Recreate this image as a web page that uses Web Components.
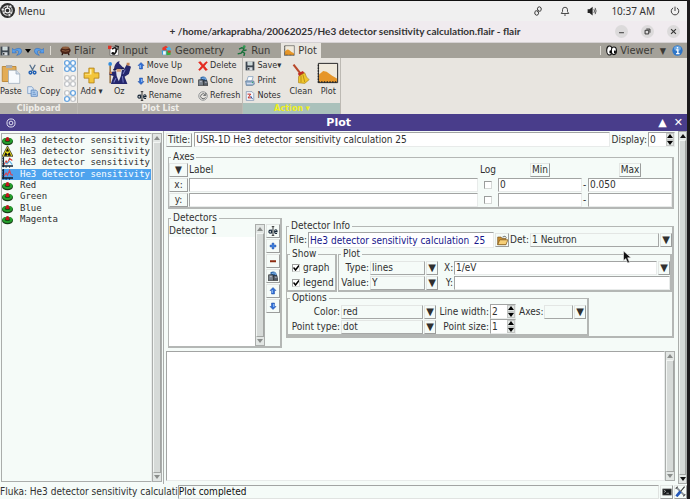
<!DOCTYPE html>
<html lang="en">
<head>
<meta charset="utf-8">
<title>flair</title>
<style>
  :root {
    --mint: #f5fbf8;
    --ink: #303030;
    --tk: "DejaVu Sans Condensed", "DejaVu Sans", sans-serif;
  }
  html, body { margin: 0; height: 100%; }
  body { color: var(--ink); font: 10px/12px var(--tk); }
</style>
</head>
<body>
<flair-app></flair-app>

<script>
// Shared by every form control
const controlStyle = `
  * { box-sizing: border-box; }
  input, select, button, textarea { font: inherit; color: inherit; margin: 0; padding: 0; border-radius: 0; outline: 0; min-width: 0; }
  .raised { background: var(--mint); border: 1px solid; border-color: #e3e6e4 #9b9d9c #9b9d9c #e3e6e4; display: flex; align-items: center; justify-content: center; }
  .sunken { background: #fff; border: 1px solid; border-color: #a2a4a3 #e8ebea #e8ebea #a2a4a3; }
`;

const arrowUp = '<path d="M8 1l6 6h-3v7H5V7H2z" fill="#2f6fd6" stroke="#1c4aa0"/><path d="M6.500 6v6" stroke="#9cc6fa" stroke-width="2"/>';
const ufo = '<ellipse cx="8" cy="9.500" rx="8" ry="5.500" fill="#173d17"/><ellipse cx="8" cy="8.500" rx="7.500" ry="4.600" fill="#25a02e"/><ellipse cx="8" cy="8" rx="4" ry="2.300" fill="#0d4b12"/><path d="M5 8l1-4 2-1 2 1 1 4-3 1z" fill="#c3161c"/>';
const axes = '<path d="M2 0v15M0 13h16" stroke="#123" stroke-width="2" fill="none"/><path d="M0 2h2M0 6h2M0 10h2M6 13v3M11 13v3" stroke="#123"/>';
const squares = (a, b, c, d) => [[1, 1, a], [9, 1, b], [1, 9, c], [9, 9, d]]
  .map(([x, y, on]) => `<rect x="${x}" y="${y}" width="6" height="6" rx="2" fill="#fff" stroke="${on ? '#4a94dc' : '#b9bcc0'}" stroke-width="1.600"/>`).join('');

const icons = {
  ubuntu: '<circle cx="8" cy="8" r="8" fill="#2c2c2c"/><circle cx="8" cy="8" r="5" fill="none" stroke="#ddd" stroke-width="1.200"/><circle cx="8" cy="8" r="2.600" fill="none" stroke="#eee" stroke-width="1.300"/><path d="M8 5.500V3M5.800 9.300L3.500 10.700M10.200 9.300l2.300 1.400" stroke="#eee"/><g fill="#eee" stroke="#2c2c2c" stroke-width=".6"><circle cx="3" cy="7" r="1.600"/><circle cx="11" cy="3.700" r="1.600"/><circle cx="10" cy="12.800" r="1.600"/></g>',
  link: '<g fill="none" stroke="#333" stroke-width="1.500"><path d="M8 10L5 7Q2 9 3 13q2 3 5 1 2-2 0-6"/><path d="M8 6l3 3q3-2 2-6-2-3-5-1-2 2 0 6"/></g>',
  bell: '<path d="M2 12h12l-2-3V6q0-4-4-4T4 6v3zM6.500 14.500h3" fill="none" stroke="#333" stroke-width="1.400"/>',
  sound: '<path d="M1 5h3l5-4v14l-5-4H1z" fill="#222"/><path d="M11 5q2 3 0 6M13 3q3 5 0 10" fill="none" stroke="#444" stroke-width="1.400"/>',
  power: '<path d="M5 3a6 6 0 1 0 6 0M8 1v7" fill="none" stroke="#333" stroke-width="1.500"/>',
  min: '<circle cx="8" cy="8" r="8" fill="#dcdadb"/><path d="M5 9.500h6" stroke="#333" stroke-width="1.200"/>',
  max: '<circle cx="8" cy="8" r="8" fill="#dcdadb"/><path d="M5 6.500h4.500V11H5zM6.500 5H11v4.500" fill="none" stroke="#333" stroke-width="1.200"/>',
  close: '<circle cx="8" cy="8" r="8" fill="#dcdadb"/><path d="M5 5l6 6M11 5l-6 6" stroke="#333" stroke-width="1.300"/>',
  floppy: '<path d="M1 1h14v14H1z" fill="#3c4650"/><path d="M4 1h8v6H4z" fill="#f5f5f5"/><path d="M4 10h8v5H4z" fill="#d6dbe0"/><path d="M5 11h2v3H5z" fill="#222"/><path d="M5 3h6M5 5h6" stroke="#8aa"/>',
  undo: '<path d="M0 4v7h7L5 8.500q4-2.500 5.500 0 1 3-3 6.500 8-2 8-8-2-6-12-1z" fill="#5b9fe8" stroke="#2a64b4" stroke-width=".8"/>',
  redo: '<path d="M16 4v7H9l2-2.500Q7 6 5.500 8.500q-1 3 3 6.500-8-2-8-8 2-6 12-1z" fill="#5b9fe8" stroke="#2a64b4" stroke-width=".8"/>',
  flair: '<path d="M3 11l-1 4h2l1-3M13 11l1 4h-2l-1-3" fill="#2a1710"/><ellipse cx="8" cy="8" rx="7.500" ry="5" fill="#4a2417"/><ellipse cx="8" cy="4" rx="5.500" ry="2" fill="#8d5b3c"/><path d="M3 8q5 2 10 0" stroke="#b27b54" fill="none"/>',
  input: '<path d="M3 3h12v12H3z" fill="#fff" stroke="#333" stroke-width=".7"/><path d="M0 1h5v5H0z" fill="#dc3428"/><path d="M6 6q5-4 6 0t-4 8" fill="none" stroke="#111" stroke-width="2.400"/><circle cx="7" cy="12" r="2" fill="#111"/><path d="M10 1l5 1-1 5" fill="none" stroke="#111" stroke-width="1.500"/>',
  geometry: '<path d="M2 4l5-3 4 3v4H2z" fill="#e8382b"/><path d="M7 5l5-3 3 4-4 4z" fill="#46b6e8"/><path d="M1 8h7v6H2z" fill="#2e9fe3"/><path d="M3 9h4v5H3z" fill="#f3f8fb"/><path d="M8 8l6 1v5l-6 1z" fill="#36ad3e"/><path d="M10 8h4v3h-4z" fill="#d93a2c"/>',
  run: '<circle cx="10.500" cy="2.500" r="2" fill="#2e9a50"/><path d="M3 6l4-2 3 1-2 5 3 2-1 4M8 9l-2 3-5 1M9 6l2 2 3-1" fill="none" stroke="#18703a" stroke-width="2"/>',
  plot: '<path d="M1 1h14v14H1z" fill="#efe9dc" stroke="#222" stroke-width=".7"/><path d="M1.500 14.500V9l3-2.500 2.500.5 4 3 3.500 2v2.500z" fill="#e69629"/><path d="M1 15V1M1 14.500h14" stroke="#222" stroke-width="1" stroke-dasharray="1 1"/>',
  viewer: '<g fill="#fff" stroke="#111" stroke-width="1.600"><ellipse cx="5" cy="8" rx="4" ry="6.500"/><ellipse cx="11.500" cy="8.500" rx="3.700" ry="5.500"/></g><ellipse cx="6.500" cy="10" rx="1.600" ry="2.500"/><ellipse cx="13" cy="10" rx="1.500" ry="2.300"/>',
  info: '<circle cx="8" cy="8" r="7.500" fill="#2f76c8"/><ellipse cx="8" cy="5" rx="5" ry="3.500" fill="#6ba6e3"/><path d="M8 3v2M6 7h2.500v5M6 12.500h5" stroke="#fff" stroke-width="2" fill="none"/>',
  paste: '<path d="M1 2h11v12H1z" fill="#e3ac55" stroke="#b98331" stroke-width=".7"/><path d="M4 .8h5v2.500H4z" fill="#a9adb3"/><path d="M6 5h6l3 3v7.500H6z" fill="#f7fafd" stroke="#9aa9ba" stroke-width=".6"/><path d="M12 5v3h3" fill="#cfdbe8" stroke="#9aa9ba" stroke-width=".6"/>',
  cut: '<path d="M4 1l5 9M12 1L7 10" stroke="#57718c" stroke-width="1.800"/><g fill="none" stroke="#1f5fb4" stroke-width="2"><circle cx="5" cy="12.500" r="2"/><circle cx="11" cy="12.500" r="2"/></g>',
  copy: '<path d="M1 1h6l2 2v8H1z" fill="#dce9f8" stroke="#6d92c0"/><path d="M6 6h7l2 2v7H6z" fill="#b7d2f0" stroke="#3f73b4"/><path d="M8 9h4M8 12h5" stroke="#3f73b4"/>',
  sqAll: squares(1, 1, 1, 1), sqNone: squares(0, 0, 0, 0), sqMix: squares(0, 1, 1, 0),
  add: '<path d="M5.500 1h5v4.500H15v5h-4.500V15h-5v-4.500H1v-5h4.500z" fill="#f3c53b" stroke="#aa7a12" stroke-width=".7"/><path d="M6.500 2h1.500v5H2V6.500h4.500z" fill="#fdf0b0"/>',
  wizard: '<path d="M1.500 3v12.500" stroke="#8f6530"/><circle cx="1.500" cy="2" r="1.300" fill="#2f8de0"/><path d="M4 6Q4.500 1 8 0l-.3 1.600L11 5z" fill="#2a2a72"/><path d="M3.500 5.500l7.500-1 .5 1-7.500 1.200z" fill="#191b50"/><path d="M3 7.500l8-1.500 2-3.500 3 1.500-1.500 5-3 2 2 5H2L3.800 10.500 1 9.500V8z" fill="#25276c"/><path d="M5.500 6h4.200L9 10.500 7.500 14 6 10.500z" fill="#e4e4e8"/><path d="M6 5.500h3v2H6z" fill="#d9a47e"/><path d="M13 1.200h2v2h-2zM1 7.500h1.800v1.600H1z" fill="#c58353"/><path d="M5.500 12l-1.500 3M10 10.500l.6 4.500M12 6l-1.500 3" stroke="#7479c5" stroke-width=".7"/>',
  up: arrowUp,
  down: `<g transform="rotate(180 8 8)">${arrowUp}</g>`,
  rename: '<path d="M8 1v14M6 1h4M6 15h4" stroke="#111" stroke-width="1.300"/><ellipse cx="3.500" cy="9" rx="2" ry="2.500" fill="none" stroke="#123" stroke-width="1.800"/><path d="M6 5.500V12M10.500 9h4q0-3-2-3t-2 3 2 3h2" stroke="#123" stroke-width="1.700" fill="none"/>',
  del: '<path d="M1 2l3-1 4 5 5-5 2 1-5 6 5 6-3 1-4-5-5 5-2-1 5-6z" fill="#e4281d" stroke="#e4281d"/>',
  clone: '<path d="M4 2q5-3 9 1l2 6-6 1-5-3z" fill="#2e68a8"/><path d="M1 6h7l1 9H0z" fill="#7c858f" stroke="#222"/><path d="M9 7h5l2 8H9z" fill="#59636e" stroke="#222"/><path d="M3 9h3M11 10h3" stroke="#dde"/><path d="M6 4l5-1 1 3" fill="none" stroke="#8abcf0" stroke-width="1.500"/>',
  refresh: '<circle cx="8" cy="8" r="6.800" fill="none" stroke="#8d9092" stroke-width="1.500"/><path d="M11.500 6A4 4 0 1 0 12 10M12.500 3v4h-4" fill="none" stroke="#66696b" stroke-width="1.600"/>',
  print: '<path d="M5 1h8l-2 7H3z" fill="#fff" stroke="#688bb4"/><path d="M1 8h13l1 5-3 2H2z" fill="#9fb7d0" stroke="#4b6a8d"/><path d="M3 12h9" stroke="#eef"/><circle cx="12" cy="10" r="1" fill="#2a5"/>',
  notes: '<path d="M2 1h9l3 3v11H2z" fill="#f3f6fb" stroke="#6680a5"/><path d="M4 5h5L5 11h5" stroke="#c22a22" stroke-width="1.600" fill="none"/><path d="M9 8l3 5" stroke="#2c5ba9" stroke-width="1.600"/>',
  broom: '<path d="M2 .5l5.500 7" stroke="#b8482a" stroke-width="1.700"/><path d="M5.500 7.500l4-2 1.500 2-4.500 2.500z" fill="#bf2d24"/><path d="M6 10l5-3q1 4 3.500 5.500L11 15.500l-5-.5z" fill="#f0c62c" stroke="#a87e13" stroke-width=".5"/><path d="M8 9.500v5M9.500 8.500l1.500 6" stroke="#a87e13" stroke-width=".6"/>',
  ufo,
  rad: '<path d="M8 0l8 15H0z" fill="#e9dd1c" stroke="#222"/><path d="M8 3l2.500 5h-5zM3 14l2-5 3 3-1 2zM13 14l-2-5-3 3 1 2z" fill="#111"/>',
  lines: axes + '<path d="M3 11l3-5 2 3 3-7 4 3" fill="none" stroke="#d83a30" stroke-width="1.700"/><path d="M4 8l3 2 4-4 4 5" fill="none" stroke="#62b4e8" stroke-width="1.600"/>',
  line1: axes + '<path d="M3 10l3-4 2 3 3-7 2 6 3 1" fill="none" stroke="#d3485a" stroke-width="1.800"/>',
  plus: '<path d="M6 2h4v4h4v4h-4v4H6v-4H2V6h4z" fill="#3d7fdc" stroke="#254f9e" stroke-width=".8"/>',
  minus: '<path d="M2 6.500h12v4H2z" fill="#8c2d12"/>',
  folder: '<path d="M1 3h5l1 2h6v9H1z" fill="#c98f31" stroke="#7a551b"/><path d="M4 7h12l-3 7H1z" fill="#f6cf77" stroke="#7a551b"/><path d="M8 3q4-3 6 1" fill="none" stroke="#333"/>',
  term: '<path d="M1 3h14v10H1z" fill="#15181a" stroke="#777"/><path d="M3 5l3 2-3 2M7 10h4" stroke="#ddd" fill="none"/>',
  tools: '<path d="M2 2l12 12" stroke="#8a9097" stroke-width="2.500"/><path d="M14 1L8 8" stroke="#333" stroke-width="1.600"/><path d="M8 8l-6 7" stroke="#2457b8" stroke-width="4"/><path d="M1 4l3-3M12 15l3-3" stroke="#555" stroke-width="1.600"/>',
  target: '<g fill="none" stroke="#e8e6f5" stroke-width="1.500"><circle cx="8" cy="8" r="6.500"/><circle cx="8" cy="8" r="3"/></g>',
  cursor: '<path d="M2 0v13l3-3 2.500 6 2.500-1-2.500-6H12z" fill="#111" stroke="#eee" stroke-width=".8"/>'
};

class UiIcon extends HTMLElement {
  constructor() {
    super();
    this.attachShadow({ mode: 'open' });
  }
  connectedCallback() {
    const size = this.getAttribute('size') || 12;
    this.shadowRoot.innerHTML = `
      <style>
        :host { display: inline-flex; flex: none; }
        svg { display: block; width: ${size}px; height: ${size}px; }
      </style>
      <svg viewBox="0 0 16 16" aria-hidden="true">${icons[this.getAttribute('name')]}</svg>`;
  }
}
customElements.define('ui-icon', UiIcon);

class TkButton extends HTMLElement {
  constructor() {
    super();
    this.attachShadow({ mode: 'open' });
  }
  connectedCallback() {
    this.shadowRoot.innerHTML = `
      <style>${controlStyle}
        :host { display: flex; flex: none; }
        button { flex: 1; }
        .raised { padding: 0 1px; }
      </style>
      <button class="raised" aria-label="${this.getAttribute('name') || this.textContent}"><slot></slot></button>`;
  }
}
customElements.define('tk-button', TkButton);

class TkEntry extends HTMLElement {
  constructor() {
    super();
    this.attachShadow({ mode: 'open' });
  }
  connectedCallback() {
    this.shadowRoot.innerHTML = `
      <style>${controlStyle}
        :host { display: flex; min-width: 0; }
        input { flex: 1; width: 0; height: var(--entry, 15px); padding: 0 1px; line-height: 14px; }
      </style>
      <input class="sunken" aria-label="${this.getAttribute('name')}" value="${this.getAttribute('value') || ''}">`;
  }
}
customElements.define('tk-entry', TkEntry);

// Label, read-only field and a separate drop-down arrow
class TkSelect extends HTMLElement {
  constructor() {
    super();
    this.attachShadow({ mode: 'open' });
  }
  connectedCallback() {
    const editable = this.hasAttribute('editable');
    const value = this.getAttribute('value') || '';
    this.shadowRoot.innerHTML = `
      <style>${controlStyle}
        :host { display: flex; align-items: center; gap: 1px; min-width: 0; }
        label { width: var(--label, auto); text-align: right; white-space: nowrap; }
        select, input { flex: 1; width: 0; height: 14px; padding: 0 1px; appearance: none; }
        select { background: var(--mint); border: 1px solid; border-color: #e3e6e4 #a5a7a6 #a5a7a6 #e3e6e4; }
        .raised { width: 12px; height: 14px; font: 10px/12px "DejaVu Sans"; }
      </style>
      <label for="f">${this.getAttribute('label')}</label>
      ${editable ? `<input id="f" class="sunken" value="${value}">` : `<select id="f"><option>${value}</option></select>`}
      <button class="raised" aria-label="Open list">▼</button>`;
  }
}
customElements.define('tk-select', TkSelect);

class TkSpin extends HTMLElement {
  constructor() {
    super();
    this.attachShadow({ mode: 'open' });
  }
  connectedCallback() {
    this.shadowRoot.innerHTML = `
      <style>${controlStyle}
        :host { display: flex; align-items: center; gap: 1px; }
        label { width: var(--label, auto); text-align: right; white-space: nowrap; }
        .box { display: flex; width: 27px; height: 15px; }
        input { flex: 1; width: 0; border: 0; background: none; padding-left: 1px; }
        .steps { display: flex; flex-direction: column; width: 8px; }
        button { flex: 1; border: 1px solid #c3c6c4; background: #e2e6e4; display: flex; align-items: center; justify-content: center; }
        svg { width: 6px; height: 4px; flex: none; }
      </style>
      <label for="f">${this.getAttribute('label')}</label>
      <span class="box sunken">
        <input id="f" value="${this.getAttribute('value')}">
        <span class="steps">
          <button aria-label="Increase"><svg viewBox="0 0 6 4"><path d="M0 4l3-4 3 4z"/></svg></button>
          <button aria-label="Decrease"><svg viewBox="0 0 6 4"><path d="M0 0l3 4 3-4z"/></svg></button>
        </span>
      </span>`;
  }
}
customElements.define('tk-spin', TkSpin);

class TkCheck extends HTMLElement {
  constructor() {
    super();
    this.attachShadow({ mode: 'open' });
  }
  connectedCallback() {
    this.shadowRoot.innerHTML = `
      <style>${controlStyle}
        :host, label { display: flex; align-items: center; gap: 3px; }
        input { appearance: none; width: 8px; height: 8px; background: #fff; border: 1px solid; border-color: #9b9d9c #d5d8d6 #d5d8d6 #9b9d9c; }
        input:checked { background: #fff url('data:image/svg+xml,<svg xmlns="http://www.w3.org/2000/svg" viewBox="0 0 6 6"><path d="M.5 2.500l2 2.500L6 .5" fill="none" stroke="black" stroke-width="1.500"/></svg>'); }
      </style>
      <label><input type="checkbox" aria-label="${this.getAttribute('name') || this.textContent}" ${this.hasAttribute('checked') ? 'checked' : ''}><slot></slot></label>`;
  }
}
customElements.define('tk-check', TkCheck);

class TkFrame extends HTMLElement {
  constructor() {
    super();
    this.attachShadow({ mode: 'open' });
  }
  connectedCallback() {
    this.shadowRoot.innerHTML = `
      <style>
        :host { display: flex; min-width: 0; }
        fieldset { flex: 1; min-width: 0; margin: 0; padding: 0; border: solid #b4b7b5; border-width: 1px 2px 2px 1px; }
        legend { margin-left: 2px; padding: 0 2px; line-height: 12px; }
      </style>
      <fieldset><legend>${this.getAttribute('label')}</legend><slot></slot></fieldset>`;
  }
}
customElements.define('tk-frame', TkFrame);

class TkScroll extends HTMLElement {
  constructor() {
    super();
    this.attachShadow({ mode: 'open' });
    this.shadowRoot.innerHTML = `
      <style>${controlStyle}
        :host { display: flex; flex-direction: column; flex: none; width: 10px; background: #c3c6c4; box-sizing: border-box; border: 1px solid #aaadab; color: #8a8d8b; }
        :host([dark]) { color: #111; }
        button { height: 8px; border: 0; background: #e2e6e4; display: flex; align-items: center; justify-content: center; }
        div { flex: 1; background: #d6dad8; border: 1px solid; border-color: #f2f5f3 #a2a5a3 #a2a5a3 #f2f5f3; }
        svg { width: 6px; height: 4px; fill: currentColor; }
      </style>
      <button aria-label="Scroll up"><svg viewBox="0 0 6 4"><path d="M0 4l3-4 3 4z"/></svg></button>
      <div></div>
      <button aria-label="Scroll down"><svg viewBox="0 0 6 4"><path d="M0 0l3 4 3-4z"/></svg></button>`;
  }
}
customElements.define('tk-scroll', TkScroll);

class DesktopBar extends HTMLElement {
  constructor() {
    super();
    this.attachShadow({ mode: 'open' });
    this.shadowRoot.innerHTML = `
      <style>
        :host { display: flex; align-items: center; height: 21px; box-sizing: border-box; border-top: 1px solid #111; background: #f0f0f0; font: 10px/14px "Noto Sans", sans-serif; color: #333; }
        button { display: flex; align-items: center; gap: 3px; border: 0; padding: 0 0 1px; background: none; font: inherit; color: inherit; }
        .tray { margin-left: auto; display: flex; align-items: center; gap: 17px; padding: 0 7px 1px 0; }
        time { margin: 0 -2px 0 -3px; }
      </style>
      <button><ui-icon name="ubuntu" size="15"></ui-icon>Menu</button>
      <div class="tray">
        <ui-icon name="link" size="10"></ui-icon>
        <ui-icon name="bell" size="10"></ui-icon>
        <ui-icon name="sound" size="10"></ui-icon>
        <time>10:37 AM</time>
        <ui-icon name="power" size="10"></ui-icon>
      </div>`;
  }
}
customElements.define('desktop-bar', DesktopBar);

class WindowTitle extends HTMLElement {
  constructor() {
    super();
    this.attachShadow({ mode: 'open' });
    this.shadowRoot.innerHTML = `
      <style>
        :host { display: flex; align-items: center; height: 22px; box-sizing: border-box; background: #f0ebef; border-bottom: 1px solid #d5d1d3; font: bold 10px/14px Lato, sans-serif; color: #333; }
        h1 { flex: 1; margin: 0; padding: 0 0 1px 75px; font: inherit; text-align: center; white-space: nowrap; }
        nav { display: flex; gap: 13px; padding-right: 7px; }
        button { display: flex; border: 0; padding: 0; background: none; }
      </style>
      <h1><slot></slot></h1>
      <nav>
        <button aria-label="Minimize"><ui-icon name="min" size="13"></ui-icon></button>
        <button aria-label="Maximize"><ui-icon name="max" size="13"></ui-icon></button>
        <button aria-label="Close"><ui-icon name="close" size="13"></ui-icon></button>
      </nav>`;
  }
}
customElements.define('window-title', WindowTitle);

class RibbonTabs extends HTMLElement {
  constructor() {
    super();
    this.attachShadow({ mode: 'open' });
    this.shadowRoot.innerHTML = `
      <style>
        :host { display: flex; height: 15px; background: #a4a199; font-size: 11px; line-height: 14px; color: #3b3935; }
        button { display: flex; align-items: center; gap: 3px; border: 0; padding: 0 7px 0 6px; background: none; font: inherit; color: inherit; }
        .quick { display: flex; align-items: center; }
        .quick button { padding: 0 2px 0 0; }
        .quick svg { width: 6px; height: 4px; margin: 0 1px; }
        i { width: 1px; height: 9px; margin: 0 3px 0 4px; background: #dedbd4; }
        .on { background: #e8e5e0; padding: 0 4px 0 3px; margin-left: 4px; }
        .right { margin-left: auto; display: flex; align-items: center; }
        .right button { padding: 0 4px 0 2px; }
        .right .drop { font-size: 9px; }
      </style>
      <div class="quick">
        <button aria-label="Save"><ui-icon name="floppy" size="10"></ui-icon></button>
        <button aria-label="Undo"><ui-icon name="undo" size="10"></ui-icon></button>
        <button aria-label="Undo list"><svg viewBox="0 0 6 4"><path d="M0 0h6L3 4z"/></svg></button>
        <button aria-label="Redo"><ui-icon name="redo" size="10"></ui-icon></button>
        <i></i>
      </div>
      <button><ui-icon name="flair" size="11"></ui-icon>Flair</button>
      <button><ui-icon name="input" size="11"></ui-icon>Input</button>
      <button><ui-icon name="geometry" size="11"></ui-icon>Geometry</button>
      <button><ui-icon name="run" size="11"></ui-icon>Run</button>
      <button class="on"><ui-icon name="plot" size="11"></ui-icon>Plot</button>
      <div class="right">
        <i></i>
        <button><ui-icon name="viewer" size="11"></ui-icon>Viewer</button>
        <button class="drop">▼</button>
        <button aria-label="Information"><ui-icon name="info" size="11"></ui-icon></button>
      </div>`;
  }
}
customElements.define('ribbon-tabs', RibbonTabs);

class RibbonButton extends HTMLElement {
  constructor() {
    super();
    this.attachShadow({ mode: 'open' });
  }
  connectedCallback() {
    const big = this.hasAttribute('big');
    this.shadowRoot.innerHTML = `
      <style>
        :host { display: flex; }
        button { display: flex; align-items: center; gap: 2px; padding: 0; border: 0; background: none; font: inherit; color: inherit; white-space: nowrap; }
        .big { flex-direction: column; justify-content: flex-end; gap: 2px; padding-bottom: 6px; }
      </style>
      <button class="${big ? 'big' : ''}" aria-label="${this.getAttribute('name') || this.textContent}"><ui-icon name="${this.getAttribute('icon')}" size="${this.getAttribute('size') || 11}"></ui-icon><slot></slot></button>`;
  }
}
customElements.define('ribbon-button', RibbonButton);

class RibbonGroup extends HTMLElement {
  constructor() {
    super();
    this.attachShadow({ mode: 'open' });
  }
  connectedCallback() {
    this.shadowRoot.innerHTML = `
      <style>
        :host { display: flex; flex-direction: column; border-right: 1px solid #bcb9b3; }
        div { flex: 1; display: flex; }
        footer { height: 11px; line-height: 11px; text-align: center; font-weight: bold; background: var(--foot, #b3b0aa); color: var(--foot-ink, #f0eee9); }
      </style>
      <div><slot></slot></div>
      <footer>${this.getAttribute('label')}</footer>`;
  }
}
customElements.define('ribbon-group', RibbonGroup);

class RibbonBar extends HTMLElement {
  constructor() {
    super();
    this.attachShadow({ mode: 'open' });
    this.shadowRoot.innerHTML = `
      <style>
        :host { display: flex; height: 56px; background: #e8e5e0; font-size: 9px; line-height: 11px; }
        .col { display: flex; flex-direction: column; justify-content: space-around; }
        .cut { margin: 0 3px 0 5px; }
        .squares { padding: 0 1px; background: #f1efeb; }
        .big { margin-left: 5px; }
        .add { margin-left: 2px; }
        .moves { margin: 0 4px 0 6px; }
        .edit { margin-right: 2px; }
        .action { --foot: #aac1bb; --foot-ink: #eef01e; }
        .save { margin: 0 3px 0 2px; }
        .last { margin-right: 1px; }
      </style>
      <ribbon-group label="Clipboard">
        <ribbon-button big icon="paste" size="20">Paste</ribbon-button>
        <div class="col cut">
          <ribbon-button icon="cut">Cut</ribbon-button>
          <ribbon-button icon="copy">Copy</ribbon-button>
        </div>
        <div class="col squares">
          <ribbon-button icon="sqAll" name="Select all" size="12"></ribbon-button>
          <ribbon-button icon="sqNone" name="Select none" size="12"></ribbon-button>
          <ribbon-button icon="sqMix" name="Invert selection" size="12"></ribbon-button>
        </div>
      </ribbon-group>
      <ribbon-group label="Plot List">
        <ribbon-button class="add" big icon="add" size="17">Add ▾</ribbon-button>
        <ribbon-button class="big" big icon="wizard" size="23">Oz</ribbon-button>
        <div class="col moves">
          <ribbon-button icon="up" size="8">Move Up</ribbon-button>
          <ribbon-button icon="down" size="8">Move Down</ribbon-button>
          <ribbon-button icon="rename" size="10">Rename</ribbon-button>
        </div>
        <div class="col edit">
          <ribbon-button icon="del" size="10">Delete</ribbon-button>
          <ribbon-button icon="clone" size="10">Clone</ribbon-button>
          <ribbon-button icon="refresh" size="10">Refresh</ribbon-button>
        </div>
      </ribbon-group>
      <ribbon-group class="action" label="Action ▾">
        <div class="col save">
          <ribbon-button icon="floppy" size="10">Save▾</ribbon-button>
          <ribbon-button icon="print" size="10">Print</ribbon-button>
          <ribbon-button icon="notes" size="10">Notes</ribbon-button>
        </div>
        <ribbon-button class="big" big icon="broom" size="20">Clean</ribbon-button>
        <ribbon-button class="big last" big icon="plot" size="22">Plot</ribbon-button>
      </ribbon-group>`;
  }
}
customElements.define('ribbon-bar', RibbonBar);

class PageHeading extends HTMLElement {
  constructor() {
    super();
    this.attachShadow({ mode: 'open' });
    this.shadowRoot.innerHTML = `
      <style>
        :host { display: flex; align-items: center; height: 17px; padding: 0 4px 0 6px; background: #493d8b; color: #fff; box-sizing: border-box; }
        h2 { flex: 1; margin: 0; padding-left: 10px; text-align: center; font: bold 11px/16px "DejaVu Sans", sans-serif; }
        button { border: 0; background: none; color: inherit; padding: 0; margin-left: 7px; font: 11px/14px "DejaVu Sans", sans-serif; }
      </style>
      <ui-icon name="target" size="10"></ui-icon>
      <h2>Plot</h2>
      <button aria-label="Maximize panel">▲</button>
      <button aria-label="Close panel">✕</button>`;
  }
}
customElements.define('page-heading', PageHeading);

class PlotList extends HTMLElement {
  constructor() {
    super();
    this.attachShadow({ mode: 'open' });
  }
  set plots(plots) {
    this._plots = plots;
    this.render();
  }
  render() {
    this.shadowRoot.innerHTML = `
      <style>
        :host { display: flex; width: 163px; flex: none; box-sizing: border-box; padding: 2px 1px 2px 1px; }
        ul { flex: 1; min-width: 0; margin: 0; padding: 1px 0; list-style: none; border: 1px solid #aaadab; border-right-color: #e8ebea; font: 9px/11px "DejaVu Sans Mono", monospace; }
        li { display: flex; align-items: center; gap: 7px; height: 11px; white-space: nowrap; }
        li:nth-child(3n) { margin-bottom: 1px; }
        .on { background: #4ea3ee; color: #fff; }
      </style>
      <ul>${this._plots.map(([icon, name, on]) => `<li class="${on ? 'on' : ''}"><ui-icon name="${icon}" size="11"></ui-icon>${name}</li>`).join('')}</ul>
      <tk-scroll></tk-scroll>`;
  }
}
customElements.define('plot-list', PlotList);

class AxesPanel extends HTMLElement {
  constructor() {
    super();
    this.attachShadow({ mode: 'open' });
    this.shadowRoot.innerHTML = `
      <style>
        :host { display: block; --entry: 14px; }
        .grid { display: grid; grid-template-columns: 19px 1fr 18px 84px 4px 84px; column-gap: 1px; row-gap: 1px; align-items: center; }
        .mid { justify-self: center; }
        tk-button { height: 14px; }
      </style>
      <tk-frame label="Axes">
        <div class="grid">
          <tk-button name="Axis list">▼</tk-button><span>Label</span><span class="mid">Log</span>
          <tk-button class="mid">Min</tk-button><span></span><tk-button class="mid">Max</tk-button>
          <tk-button>x:</tk-button><tk-entry name="x label"></tk-entry><tk-check class="mid" name="x log"></tk-check>
          <tk-entry name="x min" value="0"></tk-entry><span>-</span><tk-entry name="x max" value="0.050"></tk-entry>
          <tk-button>y:</tk-button><tk-entry name="y label"></tk-entry><tk-check class="mid" name="y log"></tk-check>
          <tk-entry name="y min"></tk-entry><span>-</span><tk-entry name="y max"></tk-entry>
        </div>
      </tk-frame>`;
  }
}
customElements.define('axes-panel', AxesPanel);

class DetectorList extends HTMLElement {
  constructor() {
    super();
    this.attachShadow({ mode: 'open' });
    this.shadowRoot.innerHTML = `
      <style>
        :host { display: flex; width: 114px; flex: none; }
        tk-frame { flex: 1; }
        .row { display: flex; height: 122px; }
        ul { flex: 1; margin: 0; padding: 0; list-style: none; background: #fff; }
        li { background: var(--mint); height: 13px; line-height: 13px; }
        .tools { display: flex; flex-direction: column; gap: 1px; margin-left: 1px; }
        .tools tk-button { width: 14px; height: 14px; }
      </style>
      <tk-frame label="Detectors">
        <div class="row">
          <ul><li>Detector 1</li></ul>
          <tk-scroll></tk-scroll>
          <div class="tools">
            <tk-button name="Rename"><ui-icon name="rename" size="10"></ui-icon></tk-button>
            <tk-button name="Add"><ui-icon name="plus" size="8"></ui-icon></tk-button>
            <tk-button name="Remove"><ui-icon name="minus" size="8"></ui-icon></tk-button>
            <tk-button name="Clone"><ui-icon name="clone" size="10"></ui-icon></tk-button>
            <tk-button name="Up"><ui-icon name="up" size="8"></ui-icon></tk-button>
            <tk-button name="Down"><ui-icon name="down" size="8"></ui-icon></tk-button>
          </div>
        </div>
      </tk-frame>`;
  }
}
customElements.define('detector-list', DetectorList);

class DetectorInfo extends HTMLElement {
  constructor() {
    super();
    this.attachShadow({ mode: 'open' });
    this.shadowRoot.innerHTML = `
      <style>
        :host { display: block; flex: 1; min-width: 0; }
        .row, .pair { display: flex; align-items: center; gap: 1px; }
        .row { padding-left: 2px; }
        .file { width: 186px; color: #16168c; --entry: 16px; }
        .row tk-button { height: 14px; width: 14px; }
        .det { flex: 1; }
        .pair { align-items: stretch; }
        .show { width: 50px; }
        .show tk-check { height: 15px; padding-left: 4px; }
        .plot { flex: 1; }
        .lines { display: grid; grid-template-columns: 99px 1fr; column-gap: 6px; --label: 30px; --entry: 14px; }
        .x { --label: 9px; }
        .y { display: flex; gap: 1px; align-items: center; }
        .y label { width: 9px; text-align: right; }
        .y tk-entry { flex: 1; }
        .options { width: 302px; }
        .opts { display: grid; grid-template-columns: 148px 77px 67px; column-gap: 3px; --label: 52px; }
        .axes { --label: auto; }
        tk-select, tk-spin { height: 15px; }
      </style>
      <tk-frame label="Detector Info">
        <div class="row">
          <span>File:</span><tk-entry class="file" name="File" value="He3 detector sensitivity calculation_25_"></tk-entry>
          <tk-button name="Browse"><ui-icon name="folder" size="11"></ui-icon></tk-button>
          <tk-select class="det" label="Det:" value="1 Neutron"></tk-select>
        </div>
        <div class="pair">
          <tk-frame class="show" label="Show">
            <tk-check checked>graph</tk-check>
            <tk-check checked>legend</tk-check>
          </tk-frame>
          <tk-frame class="plot" label="Plot">
            <div class="lines">
              <tk-select label="Type:" value="lines"></tk-select>
              <tk-select class="x" label="X:" value="1/eV" editable></tk-select>
              <tk-select label="Value:" value="Y"></tk-select>
              <div class="y"><label>Y:</label><tk-entry name="Y"></tk-entry></div>
            </div>
          </tk-frame>
        </div>
        <tk-frame class="options" label="Options">
          <div class="opts">
            <tk-select label="Color:" value="red"></tk-select>
            <tk-spin label="Line width:" value="2"></tk-spin>
            <tk-select class="axes" label="Axes:"></tk-select>
            <tk-select label="Point type:" value="dot"></tk-select>
            <tk-spin label="Point size:" value="1"></tk-spin>
          </div>
        </tk-frame>
      </tk-frame>`;
  }
}
customElements.define('detector-info', DetectorInfo);

class StatusBar extends HTMLElement {
  constructor() {
    super();
    this.attachShadow({ mode: 'open' });
    this.shadowRoot.innerHTML = `
      <style>
        :host { display: flex; align-items: center; height: 15px; background: var(--mint); white-space: nowrap; }
        .msg { flex: 1; height: 14px; box-sizing: border-box; border: 1px solid; border-color: #a2a4a3 #e0e3e1 #e0e3e1 #a2a4a3; color: #111; }
        tk-button { width: 13px; height: 14px; margin-left: 1px; }
      </style>
      <span>Fluka: He3 detector sensitivity calculati</span>
      <span class="msg">Plot completed</span>
      <tk-button name="Output"><ui-icon name="term" size="10"></ui-icon></tk-button>
      <tk-button name="Preferences"><ui-icon name="tools" size="11"></ui-icon></tk-button>`;
  }
}
customElements.define('status-bar', StatusBar);

class FlairApp extends HTMLElement {
  constructor() {
    super();
    this.attachShadow({ mode: 'open' });
    this.shadowRoot.innerHTML = `
      <style>
        :host { display: flex; flex-direction: column; min-height: 100%; box-sizing: border-box; border-right: 3px solid #1c1a1c; background: var(--mint); position: relative; }
        main { flex: 1; display: flex; }
        .panel { flex: 1; min-width: 0; display: flex; flex-direction: column; padding: 1px 3px 3px 2px; border-left: 1px solid #aaadab; }
        .title { display: flex; align-items: center; gap: 2px; }
        .title tk-button { height: 14px; }
        .title tk-entry { flex: 1; }
        axes-panel { margin: 4px 1px 0 2px; }
        .detectors { display: flex; align-items: flex-start; gap: 4px; margin: 3px 1px 0 2px; }
        detector-info { margin-top: 8px; }
        .notes { flex: 1; display: flex; margin-top: 3px; }
        textarea { flex: 1; border: 1px solid; border-color: #a2a4a3 #e8ebea #e8ebea #a2a4a3; resize: none; outline: 0; margin: 0; padding: 1px; background: #fff; }
        .bar { width: 9px; }
        .cursor { position: absolute; left: 622px; top: 251px; }
      </style>
      <desktop-bar></desktop-bar>
      <window-title>+ /home/arkaprabha/20062025/He3 detector sensitivity calculation.flair - flair</window-title>
      <ribbon-tabs></ribbon-tabs>
      <ribbon-bar></ribbon-bar>
      <page-heading></page-heading>
      <main>
        <plot-list></plot-list>
        <section class="panel">
          <div class="title">
            <tk-button>Title:</tk-button>
            <tk-entry name="Title" value="USR-1D He3 detector sensitivity calculation 25"></tk-entry>
            <tk-spin label="Display:" value="0"></tk-spin>
          </div>
          <axes-panel></axes-panel>
          <div class="detectors">
            <detector-list></detector-list>
            <detector-info></detector-info>
          </div>
          <div class="notes"><textarea aria-label="Plot commands"></textarea><tk-scroll></tk-scroll></div>
        </section>
        <tk-scroll class="bar" dark></tk-scroll>
      </main>
      <status-bar></status-bar>
      <ui-icon class="cursor" name="cursor" size="12"></ui-icon>`;
    const name = 'He3 detector sensitivity';
    this.shadowRoot.querySelector('plot-list').plots = [
      ['ufo', name], ['rad', name], ['lines', name], ['line1', name, true],
      ['ufo', 'Red'], ['ufo', 'Green'], ['ufo', 'Blue'], ['ufo', 'Magenta']
    ];
  }
}
customElements.define('flair-app', FlairApp);
</script>
</body>
</html>
